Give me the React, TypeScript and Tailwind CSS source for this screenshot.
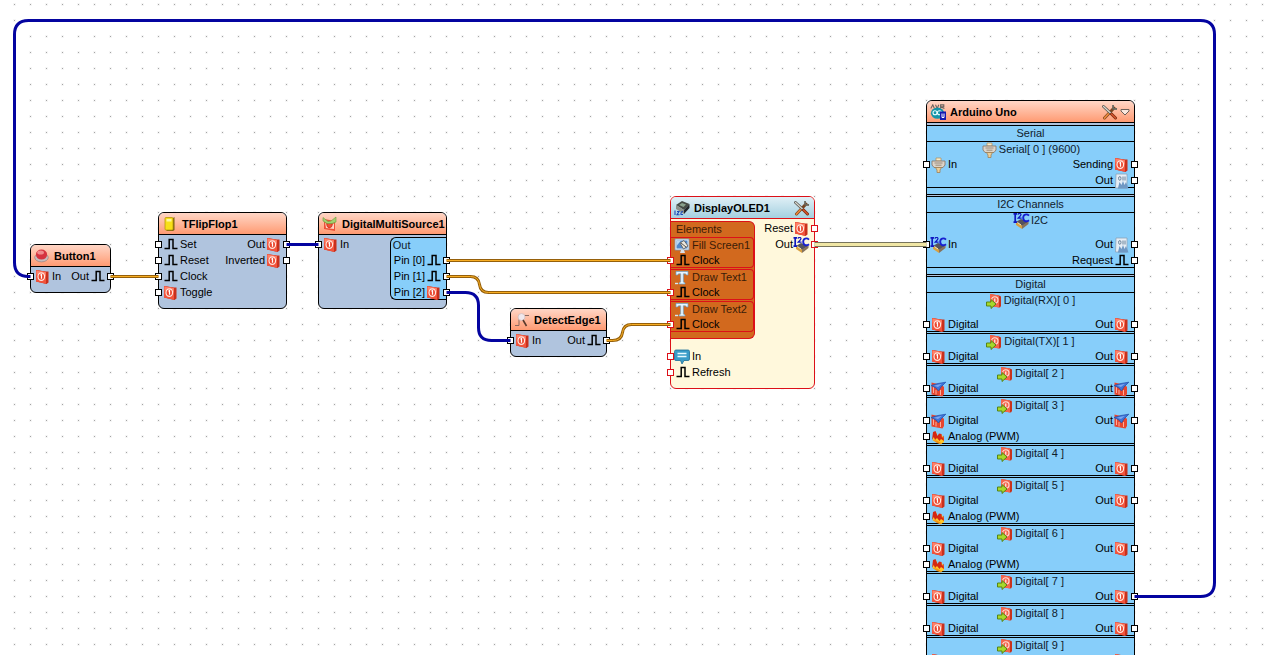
import React from "react";

const DigitalIcon = () => (
  <svg viewBox="0 0 16 16" className="size-4 shrink-0">
    <path d="M2 1L11.5 2.6L14.5 2.4V13.5L12.5 15L2 12.5Z" fill="#c9301c" />
    <path d="M2 1L12 2.8V14.8L2 12.5Z" fill="#f2543c" />
    <path d="M2.5 1.5L11.8 3.2V7L2.5 5.5Z" fill="#ff8068" />
    <ellipse cx="7.3" cy="7.6" rx="3.3" ry="3.8" fill="#ea4830" stroke="#ffe6de" strokeWidth="1.2" />
    <path d="M6.4 6.2L7.5 5.6V9.8" fill="none" stroke="#fff" strokeWidth="1.2" />
  </svg>
);

const ClockIcon = () => (
  <svg viewBox="0 0 16 16" className="size-4 shrink-0">
    <path d="M2.5 11.5H7.2V2.5H11V11.5H15.5" fill="none" stroke="#000" strokeWidth="1.5" />
  </svg>
);

const DigitalPinIcon = () => (
  <svg viewBox="0 0 16 16" className="size-4 shrink-0">
    <path d="M4 1L13 2.5L15 3.5V13L14 14.5L4 13Z" fill="#c8321c" />
    <path d="M4 1L13 2.5V14.5L4 13Z" fill="#f4654c" />
    <circle cx="8.8" cy="7" r="3.2" fill="none" stroke="#ffe0d8" strokeWidth="1.1" />
    <path d="M8.8 5.4V8.8" stroke="#fff" strokeWidth="1.1" />
    <path d="M0.5 9H5V6.5L10 11L5 15.5V13H0.5Z" fill="#a6d82c" stroke="#4e7d0c" strokeWidth="0.9" />
  </svg>
);

const InterruptIcon = () => (
  <svg viewBox="0 0 16 16" className="size-4 shrink-0">
    <path d="M1.5 1.5L12 4L14 6V13L12.5 15.5L1.5 13.5Z" fill="#e8452e" />
    <path d="M3.5 6V12M6 9V13.5M10.5 9V14" stroke="#ffb8a8" strokeWidth="0.9" />
    <path d="M1 4.5L8 2.5L15.8 1.2L11 6L8.5 10L6 7Z" fill="#3f74d8" stroke="#204ea8" strokeWidth="0.7" />
    <path d="M4 4.8L12 2.8L8 6Z" fill="#7fa8f0" />
  </svg>
);

const AnalogIcon = () => (
  <svg viewBox="0 0 16 16" className="size-4 shrink-0">
    <path d="M3 6L6 3L8 8L11 5L14 9L14 13L11 15L3 11.5Z" fill="#ffca28" />
    <path d="M2 11L3 3L5.5 2L7.5 7L9 4.5L11.5 5L12 9L13.5 6.5L14 12L11 10L9.5 12L7 9L5 11L3.8 8Z" fill="#d42814" />
    <path d="M2.5 11L7 11.5L12 14.5L14 12L11 15.5L7 14Z" fill="#f09418" />
  </svg>
);

const SerialIcon = () => (
  <svg viewBox="0 0 16 16" className="size-4 shrink-0">
    <path d="M6 1H11V4H6Z" fill="#f8ecc8" stroke="#b09468" strokeWidth="0.8" />
    <path d="M2 4H15V8L13 10.5H4L2 8Z" fill="#dcd4c8" stroke="#8c7c6c" strokeWidth="0.9" />
    <path d="M4.5 6H12.5M5.5 8.2H11.5" stroke="#948474" strokeWidth="0.9" />
    <path d="M5.5 10.5H11.5L10 13V15.5H7V13Z" fill="#ecd09c" stroke="#a08054" strokeWidth="0.8" />
  </svg>
);

const BinaryIcon = () => (
  <svg viewBox="0 0 16 16" className="size-4 shrink-0">
    <path d="M3 1H14V15H2.5Z" fill="#e6eef6" stroke="#8ca2b8" strokeWidth="0.8" />
    <ellipse cx="6.8" cy="5.4" rx="1.2" ry="1.9" fill="none" stroke="#5c7690" strokeWidth="0.9" />
    <path d="M10 3.5V7.5M12 3.5V7.5" stroke="#5c7690" strokeWidth="0.9" />
    <path d="M5 15L6.5 9L8.5 12L10 8L11.5 12L13 9L15.5 15.5H5Z" fill="#6f98c4" />
  </svg>
);

const I2CIcon = () => (
  <svg viewBox="0 0 18 16" className="-mx-px h-4 w-[18px] shrink-0">
    <path d="M4 9L9 6L16.5 9L10 13Z" fill="#55535e" />
    <path d="M4 9L10 12.5V16L4 12Z" fill="#d8a040" />
    <path d="M10 12.5L16.5 8.5V11L10 16Z" fill="#86725c" />
    <path d="M5.5 9.5L9 12" stroke="#fff0b8" strokeWidth="1" />
    <path d="M1.5 0.8H5M3.2 0.5V9.6M1.5 9.2H5" stroke="#1018c0" strokeWidth="1.7" />
    <path d="M6 1.6C6.4 0 9.2 0 8.9 1.9C8.6 3.2 7 4 6.2 5.1H9.6" fill="none" stroke="#1018c0" strokeWidth="1.3" />
    <path d="M17 2.6C14.6 .4 11.2 1.4 11.2 4.8C11.2 8.4 14.6 9.2 17 7.2" fill="none" stroke="#1820d0" strokeWidth="1.9" />
  </svg>
);

const TextIcon = () => (
  <svg viewBox="0 0 16 16" className="size-4 shrink-0">
    <path d="M2 1.5H14V5H12.5L11.5 3.8H9.3V12L11 13V14H5V13L6.7 12V3.8H4.5L3.5 5H2Z" fill="#e8f6ff" stroke="#6aa4cc" strokeWidth="0.7" />
    <path d="M1 13.5H4" stroke="#d8e8f0" strokeWidth="1.4" />
  </svg>
);

const FillIcon = () => (
  <svg viewBox="0 0 16 16" className="size-4 shrink-0">
    <path d="M1 1H15V12H1Z" fill="#e6eef6" stroke="#7e96b0" strokeWidth="0.8" />
    <path d="M2.5 2.5H13.5V10.5H2.5Z" fill="#4f88cc" />
    <path d="M2.5 2.5H7L2.5 8Z" fill="#b8d6f2" />
    <path d="M6 5L10 2.5L14 8L9.5 11Z" fill="#ece6dc" stroke="#555" strokeWidth="0.8" />
    <path d="M7 5L12 9" stroke="#555" strokeWidth="1" />
    <path d="M7 12H10L11 15H6Z" fill="#d8e0ea" />
  </svg>
);

const SpeechIcon = () => (
  <svg viewBox="0 0 16 16" className="size-4 shrink-0">
    <path d="M2 1H14Q15.5 1 15.5 2.5V10Q15.5 11.5 14 11.5H10L8 15L6.5 11.5H2Q.5 11.5 .5 10V2.5Q.5 1 2 1Z" fill="#3a9cc8" stroke="#1d6f98" strokeWidth="0.8" />
    <path d="M3.5 4.5H12.5M3.5 7.5H12.5" stroke="#e8faff" strokeWidth="1.3" />
  </svg>
);

const ToolsIcon = () => (
  <svg viewBox="0 0 16 16" className="size-4">
    <path d="M2.5 14L12 4" stroke="#7a4420" strokeWidth="3" strokeLinecap="round" />
    <path d="M2.5 14L8 8" stroke="#ee8a3c" strokeWidth="1.7" strokeLinecap="round" />
    <path d="M11 1L11.2 4.6L15 5" fill="none" stroke="#6a6a60" strokeWidth="1.8" />
    <path d="M1.5 2.5L9 9.5" stroke="#55524c" strokeWidth="2.8" strokeLinecap="round" />
    <path d="M1.5 2.5L9 9.5" stroke="#d8d8d0" strokeWidth="1.3" strokeLinecap="round" />
    <path d="M9.5 10L13.5 14" stroke="#7a2c10" strokeWidth="3" strokeLinecap="round" />
    <path d="M9.5 10L13.5 14" stroke="#d8542c" strokeWidth="1.5" strokeLinecap="round" />
  </svg>
);

const ButtonIcon = () => (
  <svg viewBox="0 0 16 16" className="size-4 shrink-0">
    <ellipse cx="7.5" cy="9.5" rx="6.8" ry="4.4" fill="#c8bcbc" stroke="#8d7a7a" strokeWidth="0.6" />
    <ellipse cx="7.5" cy="6.6" rx="5.6" ry="5" fill="#d63440" />
    <ellipse cx="6.6" cy="4.4" rx="3.4" ry="2" fill="#f08a8c" />
  </svg>
);

const FlipFlopIcon = () => (
  <svg viewBox="0 0 16 16" className="size-4 shrink-0">
    <path d="M4.5 2H11L12.5 1V14L11 15H4.5Z" fill="#7a6210" />
    <rect x="3" y="1.5" width="8" height="12.5" rx="1" fill="#f8e018" stroke="#b89808" strokeWidth="0.8" />
    <path d="M4.5 3H9.5V5.5H4.5Z" fill="#fff8a0" />
  </svg>
);

const MultiIcon = () => (
  <svg viewBox="0 0 16 16" className="size-4 shrink-0">
    <path d="M2 3L13 5V15L2 13Z" fill="#ee5038" />
    <path d="M3 6L7 13L12 7V13L4 12Z" fill="#ffd2c4" />
    <circle cx="7.5" cy="9" r="2.6" fill="none" stroke="#d43820" strokeWidth="1" />
    <path d="M1 1.5L6 5.5L9 5L14 1V6L10 7.5L5 7.5L1 5Z" fill="#a4d070" stroke="#6a9e3c" strokeWidth="0.6" />
  </svg>
);

const EdgeIcon = () => (
  <svg viewBox="0 0 16 16" className="size-4 shrink-0">
    <path d="M1 13.5H5V7M5 3.5H15" fill="none" stroke="#8a6a60" strokeWidth="1" />
    <circle cx="7.5" cy="5" r="3.5" fill="#f0e8ec" stroke="#d0bcbc" strokeWidth="0.8" />
    <path d="M9 8L12.5 14" stroke="#5a3a2c" strokeWidth="1.6" />
  </svg>
);

const OledIcon = () => (
  <svg viewBox="0 0 16 16" className="size-4 shrink-0">
    <path d="M2 5L8 1L15.5 4L10 10Z" fill="#444a44" />
    <path d="M2 5L10 10V14L2 9Z" fill="#8a8f88" />
    <path d="M10 10L15.5 4V8L10 14Z" fill="#22262a" />
    <path d="M5 5L8 3L12 4.5L9.5 7Z" fill="#88a08c" />
    <path d="M1 10.5V15M3 11.5H5L3 14.8H5.5M9 11.5Q6.5 11.5 7 14.5H9" fill="none" stroke="#1a48b8" strokeWidth="1.1" />
  </svg>
);

const ArduinoIcon = () => (
  <svg viewBox="0 0 16 16" className="size-4 shrink-0">
    <path d="M.8 4.5L2.8 0.8L4.4 4.5M5.5 .8L7.2 4.5L8.8 .8M10.6 4.5V.9H13.8V2.8H10.6L14.4 4.5" fill="none" stroke="#6c6460" strokeWidth="1.1" />
    <ellipse cx="7.5" cy="9.2" rx="6.6" ry="5.6" fill="#1494a8" />
    <circle cx="5" cy="8.8" r="2" fill="none" stroke="#e8ffff" strokeWidth="1.1" />
    <circle cx="9.4" cy="8.8" r="2" fill="none" stroke="#e8ffff" strokeWidth="1.1" />
    <rect x="10" y="7.5" width="6" height="8.5" fill="#1418b0" />
    <path d="M12 9.5V13.5H14V9.5" fill="none" stroke="#fff" strokeWidth="1" />
  </svg>
);

const Port = ({ red }: { red?: boolean }) => (
  <span className={`mt-1 size-[7px] shrink-0 border bg-white ${red ? "border-[#dc1018]" : "border-black"}`} />
);

type PinProps = {
  icon: React.ReactNode;
  label?: string;
  red?: boolean;
};

const PinIn = ({ icon, label, red }: PinProps) => (
  <div className="-ml-1 flex h-4 items-start">
    <Port red={red} />
    <span className="flex items-start gap-0.5">
      {icon}
      {label && <span>{label}</span>}
    </span>
  </div>
);

const PinOut = ({ icon, label, red }: PinProps) => (
  <div className="-mr-1 flex h-4 items-start justify-end">
    <span className="flex items-start pr-0.5">
      {label && <span>{label}</span>}
      {icon}
    </span>
    <Port red={red} />
  </div>
);

type NodeProps = {
  title: string;
  icon: React.ReactNode;
  place: string;
  tone?: "salmon" | "blue";
  tools?: React.ReactNode;
  children: React.ReactNode;
};

const Node = ({ title, icon, place, tone = "salmon", tools, children }: NodeProps) => (
  <section
    className={`absolute rounded-md border ${place} ${
      tone === "blue" ? "border-[#dc1018] bg-[#fff8dc]" : "border-black bg-[#b0c4de]"
    }`}
  >
    <header
      className={`flex h-[22px] items-center gap-1 rounded-t-[5px] border-b pl-[3px] ${
        tone === "blue"
          ? "border-[#dc1018] bg-linear-to-b from-[#e0f0f6] to-[#a4d0e0]"
          : "border-black bg-linear-to-b from-[#ffd6c6] to-[#ff9a72]"
      }`}
    >
      {icon}
      <h2 className="grow font-bold">{title}</h2>
      {tools && <div className="flex items-center gap-0.5 pr-1">{tools}</div>}
    </header>
    {children}
  </section>
);

const Element = ({ icon, label }: { icon: React.ReactNode; label: string }) => (
  <div className="rounded-r-sm border-y border-r border-[#dc1018]">
    <div className="flex h-[15px] items-start gap-0.5 pl-[3px] text-[#3a1c08]">
      {icon}
      {label}
    </div>
    <div className="-mb-0.5">
      <PinIn icon={<ClockIcon />} label="Clock" red />
    </div>
  </div>
);

const Group = ({ title, children }: { title: string; children: React.ReactNode }) => (
  <div className="border-y border-black bg-[#87cefa] pb-1.5">
    <h3 className="h-[15px] text-center text-[#10202c]">{title}</h3>
    <div className="flex flex-col gap-px">{children}</div>
  </div>
);

type ChannelProps = {
  icon: React.ReactNode;
  label: string;
  spaced?: boolean;
  left: React.ReactNode;
  right: React.ReactNode;
};

const Channel = ({ icon, label, spaced, left, right }: ChannelProps) => (
  <div className="border-y border-black">
    <div className="flex h-[15px] items-start justify-center gap-0.5 text-[#10202c]">
      {icon}
      {label}
    </div>
    <div className={`-mb-0.5 flex justify-between ${spaced ? "pt-[9px]" : ""}`}>
      <div>{left}</div>
      <div>{right}</div>
    </div>
  </div>
);

const pins = [
  { label: "Digital(RX)[ 0 ]", spaced: true },
  { label: "Digital(TX)[ 1 ]" },
  { label: "Digital[ 2 ]", interrupt: true },
  { label: "Digital[ 3 ]", interrupt: true, pwm: true },
  { label: "Digital[ 4 ]" },
  { label: "Digital[ 5 ]", pwm: true },
  { label: "Digital[ 6 ]", pwm: true },
  { label: "Digital[ 7 ]" },
  { label: "Digital[ 8 ]" },
  { label: "Digital[ 9 ]", bare: true },
];

const clockWires = [
  "M110.5 276.5H158.5",
  "M446.5 260.5H670.5",
  "M446.5 276.5H470.5Q478.5 276.5 479.5 284.5Q480.5 292.5 488.5 292.5H670.5",
  "M606.5 340.5H612.5Q621.5 340.5 622.5 332.5Q623.5 324.5 631.5 324.5H670.5",
];

const digitalWires = [
  "M286.5 244.5H318.5",
  "M446.5 292.5H465.5Q478.5 292.5 478.5 305.5V327.5Q478.5 340.5 491.5 340.5H510.5",
  "M1134.5 596.5H1200.5Q1214.5 596.5 1214.5 582.5V34.5Q1214.5 20.5 1200.5 20.5H28.5Q14.5 20.5 14.5 34.5V262.5Q14.5 276.5 28.5 276.5H30.5",
];

const Grid = () => (
  <svg className="absolute inset-0 size-full">
    <pattern id="grid" width="16" height="16" patternUnits="userSpaceOnUse">
      <rect x="13" y="3" width="3" height="3" fill="#f6f6f6" />
      <rect x="14" y="4" width="1" height="1" fill="#a4a4a4" />
    </pattern>
    <rect width="100%" height="100%" fill="url(#grid)" />
  </svg>
);

const Wires = () => (
  <svg className="pointer-events-none absolute inset-0 size-full" fill="none">
    {clockWires.map((d) => (
      <g key={d}>
        <path d={d} stroke="#96600a" strokeWidth="3" />
        <path d={d} stroke="#f8ae24" strokeWidth="1" />
      </g>
    ))}
    {digitalWires.map((d) => (
      <path key={d} d={d} stroke="#0404a0" strokeWidth="3" />
    ))}
    <path d="M814.5 244.5H926.5" stroke="#77745c" strokeWidth="5" />
    <path d="M814.5 244.5H926.5" stroke="#f0e6a4" strokeWidth="3" />
  </svg>
);

const App = () => {
  return (
    <main className="relative h-screen overflow-hidden bg-white font-['Liberation_Sans',Arial,sans-serif] text-[11px] leading-[14px] whitespace-nowrap text-black">
      <Grid />

      <Node title="Button1" icon={<ButtonIcon />} place="left-[30px] top-[244px] w-[81px]">
        <div className="flex justify-between pt-0.5 pb-[7px]">
          <PinIn icon={<DigitalIcon />} label="In" />
          <PinOut icon={<ClockIcon />} label="Out" />
        </div>
      </Node>

      <Node title="TFlipFlop1" icon={<FlipFlopIcon />} place="left-[158px] top-[212px] w-[129px]">
        <div className="flex justify-between pt-0.5 pb-[7px]">
          <div>
            <PinIn icon={<ClockIcon />} label="Set" />
            <PinIn icon={<ClockIcon />} label="Reset" />
            <PinIn icon={<ClockIcon />} label="Clock" />
            <PinIn icon={<DigitalIcon />} label="Toggle" />
          </div>
          <div>
            <PinOut icon={<DigitalIcon />} label="Out" />
            <PinOut icon={<DigitalIcon />} label="Inverted" />
          </div>
        </div>
      </Node>

      <Node title="DigitalMultiSource1" icon={<MultiIcon />} place="left-[318px] top-[212px] w-[129px]">
        <div className="flex items-start justify-between pt-0.5 pb-2">
          <PinIn icon={<DigitalIcon />} label="In" />
          <div className="rounded-l-md border-y border-l border-black bg-[#87cefa]">
            <h3 className="h-[15px] pl-0.5 text-[#10202c]">Out</h3>
            <div className="-mb-0.5 pl-[3px]">
              <PinOut icon={<ClockIcon />} label="Pin [0]" />
              <PinOut icon={<ClockIcon />} label="Pin [1]" />
              <PinOut icon={<DigitalIcon />} label="Pin [2]" />
            </div>
          </div>
        </div>
      </Node>

      <Node title="DetectEdge1" icon={<EdgeIcon />} place="left-[510px] top-[308px] w-[97px]">
        <div className="flex justify-between pt-0.5 pb-[7px]">
          <PinIn icon={<DigitalIcon />} label="In" />
          <PinOut icon={<ClockIcon />} label="Out" />
        </div>
      </Node>

      <Node
        title="DisplayOLED1"
        icon={<OledIcon />}
        place="left-[670px] top-[196px] w-[145px]"
        tone="blue"
        tools={
          <button type="button" aria-label="Settings">
            <ToolsIcon />
          </button>
        }
      >
        <div className="flex justify-between pt-0.5 pb-[7px]">
          <div className="flex flex-col gap-2.5">
            <div className="w-[84px] rounded-r-md border-y border-r border-[#dc1018] bg-[#d2691e] pb-1.5">
              <h3 className="h-[15px] pl-[5px] text-[#3a1c08]">Elements</h3>
              <div className="flex flex-col gap-px">
                <Element icon={<FillIcon />} label="Fill Screen1" />
                <Element icon={<TextIcon />} label="Draw Text1" />
                <Element icon={<TextIcon />} label="Draw Text2" />
              </div>
            </div>
            <div>
              <PinIn icon={<SpeechIcon />} label="In" red />
              <PinIn icon={<ClockIcon />} label="Refresh" red />
            </div>
          </div>
          <div>
            <PinOut icon={<DigitalIcon />} label="Reset" red />
            <PinOut icon={<I2CIcon />} label="Out" red />
          </div>
        </div>
      </Node>

      <Node
        title="Arduino Uno"
        icon={<ArduinoIcon />}
        place="left-[926px] top-[100px] w-[209px]"
        tools={
          <>
            <button type="button" aria-label="Settings">
              <ToolsIcon />
            </button>
            <button type="button" aria-label="More">
              <svg viewBox="0 0 10 8" className="h-2 w-2.5">
                <path d="M1 1.5H9V3L5 7L1 3Z" fill="#fbe8de" stroke="#6c6058" strokeWidth="1" />
              </svg>
            </button>
          </>
        }
      >
        <div className="flex flex-col gap-px pt-0.5">
          <Group title="Serial">
            <Channel
              icon={<SerialIcon />}
              label="Serial[ 0 ] (9600)"
              left={<PinIn icon={<SerialIcon />} label="In" />}
              right={
                <>
                  <PinOut icon={<DigitalIcon />} label="Sending" />
                  <PinOut icon={<BinaryIcon />} label="Out" />
                </>
              }
            />
          </Group>
          <Group title="I2C Channels">
            <Channel
              icon={<I2CIcon />}
              label="I2C"
              spaced
              left={<PinIn icon={<I2CIcon />} label="In" />}
              right={
                <>
                  <PinOut icon={<BinaryIcon />} label="Out" />
                  <PinOut icon={<ClockIcon />} label="Request" />
                </>
              }
            />
          </Group>
          <Group title="Digital">
            {pins.map((pin) => (
              <Channel
                key={pin.label}
                icon={<DigitalPinIcon />}
                label={pin.label}
                spaced={pin.spaced}
                left={
                  <>
                    <PinIn
                      icon={pin.interrupt ? <InterruptIcon /> : <DigitalIcon />}
                      label={pin.bare ? undefined : "Digital"}
                    />
                    {pin.pwm && <PinIn icon={<AnalogIcon />} label="Analog (PWM)" />}
                  </>
                }
                right={
                  <PinOut
                    icon={pin.interrupt ? <InterruptIcon /> : <DigitalIcon />}
                    label={pin.bare ? undefined : "Out"}
                  />
                }
              />
            ))}
          </Group>
        </div>
      </Node>

      <Wires />
    </main>
  );
};

export default App;
